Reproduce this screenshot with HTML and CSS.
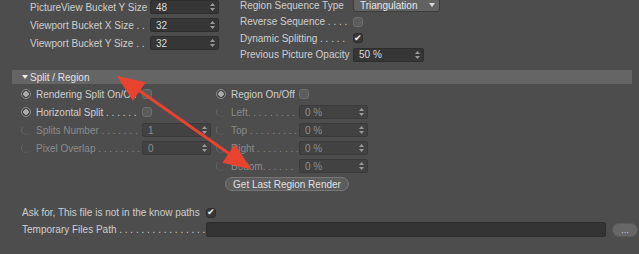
FILE: index.html
```html
<!DOCTYPE html>
<html lang="en">
<head>
	<meta charset="UTF-8">
	<title>Render Settings</title>
	<link rel="stylesheet" href="styles.css">
</head>
<body>
	<div id="wrap">
		<div class="top">
			<div class="col col-a">
				<div class="row"><span class="label">PictureView Bucket Y Size</span><span class="field num">48<svg class="spin" width="5" height="8"><polygon points="0,3 2.5,0 5,3"/><polygon points="0,5 2.5,8 5,5"/></svg></span></div>
				<div class="row"><span class="label">Viewport Bucket X Size . .</span><span class="field num">32<svg class="spin" width="5" height="8"><polygon points="0,3 2.5,0 5,3"/><polygon points="0,5 2.5,8 5,5"/></svg></span></div>
				<div class="row"><span class="label">Viewport Bucket Y Size . .</span><span class="field num">32<svg class="spin" width="5" height="8"><polygon points="0,3 2.5,0 5,3"/><polygon points="0,5 2.5,8 5,5"/></svg></span></div>
			</div>
			<div class="col col-b">
				<div class="row"><span class="label">Region Sequence Type</span><span class="select">Triangulation<svg class="caret" width="6" height="4"><polygon points="0,0 6,0 3,4"/></svg></span></div>
				<div class="row"><span class="label">Reverse Sequence . . . .</span><span class="check"></span></div>
				<div class="row"><span class="label">Dynamic Splitting . . . . .</span><span class="check on">&#10004;</span></div>
				<div class="row"><span class="label">Previous Picture Opacity</span><span class="field num">50 %<svg class="spin" width="5" height="8"><polygon points="0,3 2.5,0 5,3"/><polygon points="0,5 2.5,8 5,5"/></svg></span></div>
			</div>
		</div>

		<div class="group-head"><svg class="tri" width="6" height="4"><polygon points="0,0 6,0 3,4"/></svg>Split / Region</div>

		<div class="group">
			<div class="col col-c">
				<div class="row"><span class="radio"></span><span class="label">Rendering Split On/Off</span><span class="check"></span></div>
				<div class="row"><span class="radio"></span><span class="label">Horizontal Split . . . . . .</span><span class="check"></span></div>
				<div class="row off"><span class="radio"></span><span class="label">Splits Number . . . . . . .</span><span class="field num">1<svg class="spin" width="5" height="8"><polygon points="0,3 2.5,0 5,3"/><polygon points="0,5 2.5,8 5,5"/></svg></span></div>
				<div class="row off"><span class="radio"></span><span class="label">Pixel Overlap . . . . . . . .</span><span class="field num">0<svg class="spin" width="5" height="8"><polygon points="0,3 2.5,0 5,3"/><polygon points="0,5 2.5,8 5,5"/></svg></span></div>
			</div>
			<div class="col col-d">
				<div class="row"><span class="radio"></span><span class="label">Region On/Off</span><span class="check"></span></div>
				<div class="row off"><span class="radio"></span><span class="label">Left. . . . . . . . .</span><span class="field num">0 %<svg class="spin" width="5" height="8"><polygon points="0,3 2.5,0 5,3"/><polygon points="0,5 2.5,8 5,5"/></svg></span></div>
				<div class="row off"><span class="radio"></span><span class="label">Top . . . . . . . . .</span><span class="field num">0 %<svg class="spin" width="5" height="8"><polygon points="0,3 2.5,0 5,3"/><polygon points="0,5 2.5,8 5,5"/></svg></span></div>
				<div class="row off"><span class="radio"></span><span class="label">Right . . . . . . . .</span><span class="field num">0 %<svg class="spin" width="5" height="8"><polygon points="0,3 2.5,0 5,3"/><polygon points="0,5 2.5,8 5,5"/></svg></span></div>
				<div class="row off"><span class="radio"></span><span class="label">Bottom. . . . . .</span><span class="field num">0 %<svg class="spin" width="5" height="8"><polygon points="0,3 2.5,0 5,3"/><polygon points="0,5 2.5,8 5,5"/></svg></span></div>
				<div class="row"><span class="button">Get Last Region Render</span></div>
			</div>
		</div>

		<div class="bottom">
			<div class="row"><span class="label">Ask for, This file is not in the know paths</span><span class="check on">&#10004;</span></div>
			<div class="row"><span class="label">Temporary Files Path . . . . . . . . . . . . . . . .</span><span class="field path"></span><span class="button more">...</span></div>
		</div>

		<!-- annotation drawn over the screenshot -->
		<svg class="arrow" width="639" height="254">
			<line x1="137" y1="89" x2="231" y2="155"/>
			<polygon points="120,78 132.9,98 143.2,83.2"/>
			<polygon points="248,167 224.8,161.8 235,147"/>
		</svg>
	</div>
</body>
</html>
```

FILE: styles.css
```css
* {
	margin: 0;
	padding: 0;
	box-sizing: border-box;
}
body {
	font-family: "Liberation Sans", Arial, sans-serif;
	font-size: 10px;
	background: #4d4d4d;
	color: #cdcdcd;
}
#wrap {
	position: relative;
	width: 639px;
	height: 254px;
	overflow: hidden;
}
.row {
	display: flex;
	align-items: center;
	height: 18px;
	white-space: nowrap;
}
.label {
	flex: none;
	overflow: hidden;
}
.top {
	display: flex;
	height: 70px;
}
.col-a {
	padding-left: 30px;
	margin-top: -2px;
	width: 240px;
}
.col-a .label {
	width: 120px;
}
.col-b {
	margin-top: -3px;
}
.col-b .row {
	height: 16.5px;
}
.col-b .label {
	width: 113px;
}
.field {
	position: relative;
	display: flex;
	align-items: center;
	width: 69px;
	height: 14px;
	padding-left: 5px;
	background: #363636;
	border: 1px solid #2e2e2e;
	border-radius: 2px;
	color: #dadada;
}
.col-b .field {
	width: 71px;
}
.spin {
	position: absolute;
	right: 3px;
	top: 2px;
	fill: #9a9a9a;
}
.select {
	position: relative;
	display: flex;
	align-items: center;
	width: 87px;
	height: 14px;
	padding-left: 6px;
	background: #626262;
	border: 1px solid #3c3c3c;
	border-radius: 3px;
	color: #e6e6e6;
}
.caret {
	position: absolute;
	right: 4px;
	top: 4px;
	fill: #dcdcdc;
}
.check {
	display: inline-flex;
	align-items: center;
	justify-content: center;
	width: 10px;
	height: 10px;
	background: #5c5c5c;
	border: 1px solid #6e6e6e;
	border-radius: 3px;
	font-size: 9px;
	line-height: 1;
	color: #f2f2f2;
}
.check.on {
	background: #383838;
	border-color: #2e2e2e;
}
.group-head {
	display: flex;
	align-items: center;
	margin: 0 7px 0 12px;
	height: 14px;
	padding-left: 10px;
	background: #656565;
	color: #e2e2e2;
}
.tri {
	fill: #eaeaea;
	margin-right: 2px;
}
.group {
	display: flex;
	padding-top: 1px;
	height: 120px;
}
.radio {
	flex: none;
	width: 10px;
	height: 10px;
	margin-right: 5px;
	border-radius: 50%;
	border: 1px solid #8a8a8a;
	background: radial-gradient(circle, #aaa 0 2.5px, #444 3px);
}
.off {
	color: #8b8b8b;
}
.off .radio {
	border-color: transparent transparent #5a5a5a #666;
	background: none;
}
.off .field {
	color: #8e8e8e;
	background: #424242;
	border-color: #3a3a3a;
}
.col-c {
	padding-left: 21px;
	width: 216px;
}
.col-c .label {
	width: 106px;
}
.col-d .label {
	width: 68px;
}
.col-d .field {
	width: 69px;
}
.button {
	display: inline-flex;
	align-items: center;
	justify-content: center;
	height: 14px;
	width: 124px;
	margin-left: 9px;
	background: #5d5d5d;
	border: 1px solid #777;
	border-radius: 7px;
	color: #e0e0e0;
}
.bottom {
	padding-left: 22px;
}
.bottom .row {
	height: 17px;
}
.bottom .label {
	width: 184px;
}
.path {
	width: 400px;
	height: 15px;
	background: #333;
}
.button.more {
	width: 26px;
	margin-left: 6px;
	background: #676767;
	border-color: #5a5a5a;
	font-size: 9px;
	color: #cfcfcf;
}
.arrow {
	position: absolute;
	left: 0;
	top: 0;
	pointer-events: none;
	fill: #e8432e;
	stroke: #e8432e;
	stroke-width: 3;
}
```
